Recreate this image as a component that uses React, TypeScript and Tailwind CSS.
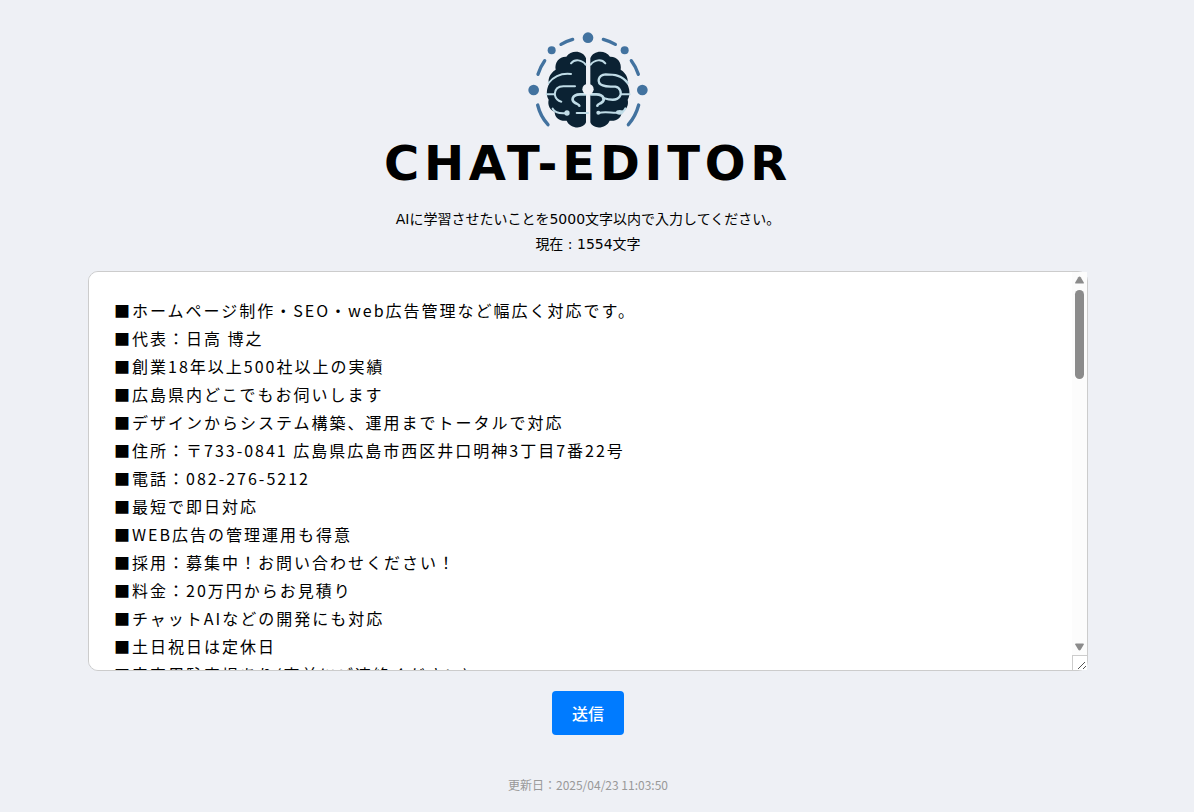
import React from "react";

const lines: string[] = [
  "■ホームページ制作・SEO・web広告管理など幅広く対応です。",
  "■代表：日高 博之",
  "■創業18年以上500社以上の実績",
  "■広島県内どこでもお伺いします",
  "■デザインからシステム構築、運用までトータルで対応",
  "■住所：〒733-0841 広島県広島市西区井口明神3丁目7番22号",
  "■電話：082-276-5212",
  "■最短で即日対応",
  "■WEB広告の管理運用も得意",
  "■採用：募集中！お問い合わせください！",
  "■料金：20万円からお見積り",
  "■チャットAIなどの開発にも対応",
  "■土日祝日は定休日",
  "■来客用駐車場あり(事前にご連絡ください)",
];

const Logo: React.FC = () => (
  <svg viewBox="0 0 408 330" className="w-[136px] h-[110px]" fill="none" role="img" aria-label="CHAT-EDITOR">
    {/* Orbit */}
    <g fill="#42729f">
      <circle cx="204" cy="38" r="16" />
      <circle cx="95" cy="76" r="12" />
      <circle cx="314" cy="76" r="12" />
      <circle cx="41" cy="195" r="16" />
      <circle cx="367" cy="195" r="16" />
    </g>
    <g stroke="#42729f" strokeWidth="10" strokeLinecap="round">
      <path d="M123 58Q140 48 158 43" />
      <path d="M250 43Q268 48 286 58" />
      <path d="M54 148Q61 125 74 107" />
      <path d="M334 107Q348 125 355 148" />
      <path d="M53 240Q61 274 84 299" />
      <path d="M356 240Q347 274 325 299" />
    </g>
    {/* Brain halves */}
    <g fill="#0b2233">
      <path d="M198 100C190 76 153 74 139 95C118 94 103 112 107 134C88 146 82 166 88 176C79 190 78 212 86 224C82 240 90 256 104 260C104 280 122 290 140 287C150 312 190 314 198 292Z" />
      <path d="M211 100C219 76 256 74 270 95C291 94 306 112 302 134C321 146 327 166 321 176C330 190 331 212 323 224C327 240 319 256 305 260C305 280 287 290 269 287C259 312 219 314 211 292Z" />
    </g>
    <g stroke="#c0dce7" strokeWidth="6" strokeLinecap="round" strokeLinejoin="round">
      <path d="M153 115C164 101 186 104 197 119" />
      <path d="M86 174C105 150 127 144 153 147" />
      <path d="M80 208H104C105 192 114 184 130 184H165" />
      <path d="M104 208C107 222 113 228 124 230" />
      <path d="M197 208H180C156 209 152 226 166 234C172 237 178 239 178 242" strokeWidth="8" />
      <path d="M98 251C105 264 120 266 140 264" />
      <path d="M170 264H204" />
      <path d="M212 119C223 104 245 101 256 115" />
      <path
        d="M323 174C306 151 284 148 257 148C233 150 229 174 248 181C260 187 275 184 286 185C301 188 306 204 299 215C290 229 270 225 249 219"
        strokeWidth="7"
      />
      <path d="M303 208H329" />
      <path d="M212 208H229C253 209 257 226 243 234C237 237 232 239 232 242" strokeWidth="8" />
      <path d="M235 264C262 258 276 266 298 263C308 262 313 257 316 250" />
    </g>
    <g fill="#c0dce7">
      <circle cx="141" cy="264" r="8" />
      <circle cx="235" cy="263" r="6" />
      <ellipse cx="299" cy="262" rx="11" ry="7" />
    </g>
    <circle cx="204" cy="193" r="17" fill="#eef0f5" />
  </svg>
);

const ScrollRail: React.FC = () => (
  <div
    aria-hidden="true"
    className="absolute top-px right-px bottom-px w-[15px] flex flex-col items-center bg-[#fcfcfc] pointer-events-none"
  >
    <svg viewBox="0 0 9 8" className="w-[9px] h-2 mt-1 mb-1.5 shrink-0" fill="#8b8b8b">
      <path d="M4.5 0.5Q5.2 0.5 5.7 1.3L8.8 6.4Q9.2 7.5 8 7.5H1Q-0.2 7.5 0.2 6.4L3.3 1.3Q3.8 0.5 4.5 0.5Z" />
    </svg>
    <div className="w-[9px] h-[89px] rounded-full bg-[#8b8b8b]" />
    <svg viewBox="0 0 9 8" className="w-[9px] h-2 mt-auto mb-1 shrink-0" fill="#8b8b8b">
      <path d="M4.5 7.5Q5.2 7.5 5.7 6.7L8.8 1.6Q9.2 0.5 8 0.5H1Q-0.2 0.5 0.2 1.6L3.3 6.7Q3.8 7.5 4.5 7.5Z" />
    </svg>
    <div className="w-full h-[15px] shrink-0 border-t border-l border-[#cccccc] bg-white">
      <svg viewBox="0 0 14 14" className="size-3.5" stroke="#555555" fill="none">
        <path d="M5 13L12 6M10 13L13 10" />
      </svg>
    </div>
  </div>
);

export default function App() {
  return (
    <div className="min-h-screen bg-[#eef0f5] text-black font-['Noto_Sans_CJK_JP',sans-serif]">
      <main className="flex flex-col items-center pt-[25px] pl-4 pr-[34px] pb-4">
        <Logo />
        <h1 className="mt-1 text-5xl leading-[48px] font-bold tracking-widest font-['DejaVu_Sans',sans-serif]">
          CHAT-EDITOR
        </h1>

        <label
          htmlFor="prompt"
          className="mt-5 text-sm leading-[25px] text-center font-['DejaVu_Sans','Noto_Sans_CJK_JP',sans-serif]"
        >
          AIに学習させたいことを5000文字以内で入力してください。
          <br />
          現在 : 1554文字
        </label>

        <form className="mt-3.5 w-full flex flex-col items-center" onSubmit={(e) => e.preventDefault()}>
          <div className="relative w-full max-w-[1000px]">
            <textarea
              id="prompt"
              defaultValue={lines.join("\n")}
              className="block w-full h-[400px] px-[25px] py-6 resize-none rounded-[10px] border border-[#cccccc] bg-white text-base leading-7 tracking-[2px] outline-none [scrollbar-width:none]"
            />
            <ScrollRail />
          </div>
          <button
            type="submit"
            className="mt-5 h-11 px-5 rounded bg-[#007bff] text-white text-base font-medium cursor-pointer"
          >
            送信
          </button>
        </form>

        <p className="mt-10 text-xs leading-5 text-[#999999]">更新日：2025/04/23 11:03:50</p>
      </main>
    </div>
  );
}
